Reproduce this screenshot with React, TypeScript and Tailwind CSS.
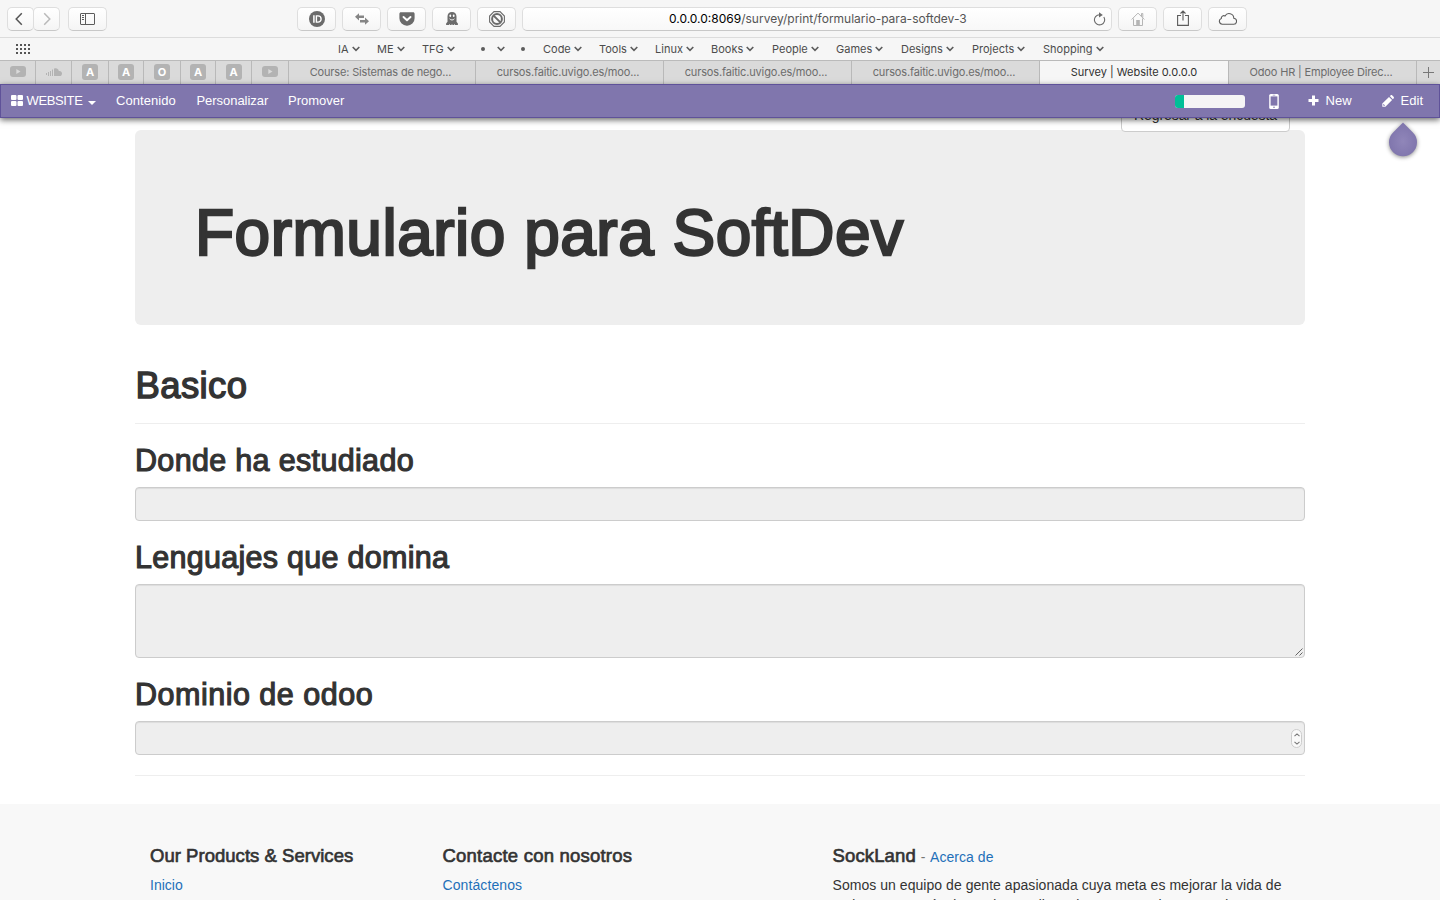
import React from "react";

const stroke = "#6b6b6b";

function ToolButton({ children, className = "" }: { children: React.ReactNode; className?: string }) {
  return (
    <button
      className={`flex h-6 items-center justify-center rounded-[5px] border border-[#dedede] border-b-[#c8c8c8] bg-linear-to-b from-white to-[#f5f5f5] ${className}`}
    >
      {children}
    </button>
  );
}

function Chevron() {
  return (
    <svg width="8" height="6" viewBox="0 0 8 6" fill="none" stroke="#5c5c5c" strokeWidth="1.6" className="-ml-px shrink-0">
      <path d="M.7 1 4 4.3 7.3 1" />
    </svg>
  );
}

function Toolbar() {
  return (
    <div className="flex h-[38px] items-center border-b border-[#dcdcdc] pl-[7px]">
      <ToolButton className="w-[27px]">
        <svg width="8" height="14" viewBox="0 0 8 14" fill="none" stroke="#555" strokeWidth="1.5" className="-ml-[3px]"><path d="M6.8 1.2 1.2 7l5.6 5.8" /></svg>
      </ToolButton>
      <ToolButton className="-ml-px w-[27px]">
        <svg width="8" height="14" viewBox="0 0 8 14" fill="none" stroke="#b9b9b9" strokeWidth="1.5"><path d="M1.2 1.2 6.8 7l-5.6 5.8" /></svg>
      </ToolButton>
      <ToolButton className="ml-2 w-[39px]">
        <svg width="15" height="12" viewBox="0 0 15 12" fill="none" stroke="#5c5c5c">
          <rect x=".5" y=".5" width="14" height="11" rx=".5" />
          <path d="M5.5 .5v11M2 2.5h2M2 4.5h2M2 6.5h2" />
        </svg>
      </ToolButton>
      <div className="ml-[190px] flex gap-1.5">
        <ToolButton className="w-[39px]">
          <svg width="16" height="16" viewBox="0 0 16 16">
            <circle cx="8" cy="8" r="8" fill={stroke} />
            <path d="M4.9 4.2v7.6" stroke="#fff" strokeWidth="1.5" />
            <path d="M7.4 4.9h1.6a3.1 3.1 0 0 1 0 6.2H7.4z" fill="none" stroke="#fff" strokeWidth="1.4" />
          </svg>
        </ToolButton>
        <ToolButton className="w-[39px]">
          <svg width="14" height="12" viewBox="0 0 14 12" fill="#858585">
            <path d="M0 3.8 4 .3v2.3h5v2.5H4v2.3zM14 8.2l-4 3.5V9.4H5V6.9h5V4.6z" />
          </svg>
        </ToolButton>
        <ToolButton className="w-[39px]">
          <svg width="16" height="14" viewBox="0 0 16 14">
            <path d="M2 .3h12c1 0 1.6.7 1.6 1.6v4.3A7.4 7.4 0 0 1 8 13.7 7.4 7.4 0 0 1 .4 6.2V1.9C.4 1 1 .3 2 .3z" fill={stroke} />
            <path d="M4.5 5 8 8.3 11.5 5" fill="none" stroke="#fff" strokeWidth="1.9" strokeLinecap="round" strokeLinejoin="round" />
          </svg>
        </ToolButton>
        <ToolButton className="w-[39px]">
          <svg width="12" height="13" viewBox="0 0 12 13">
            <path d="M1.5 4.6C1.5 1.8 3.1 0 6 0s4.5 1.8 4.5 4.6v5.2l1.4 1.7V13H.1v-1.5l1.4-1.7z" fill={stroke} />
            <ellipse cx="4.3" cy="3.8" rx=".9" ry="1.2" fill="#fff" /><ellipse cx="7.7" cy="3.8" rx=".9" ry="1.2" fill="#fff" />
            <path d="M3.6 6.8c1.2 1.6 3.6 1.6 4.8 0" fill="none" stroke="#fff" strokeWidth=".9" />
            <path d="M3.5 13v-1M6 13v-1M8.5 13v-1" stroke="#fff" strokeWidth=".6" />
          </svg>
        </ToolButton>
        <ToolButton className="w-[39px]">
          <svg width="16" height="16" viewBox="0 0 16 16" fill="none" stroke={stroke}>
            <path d="M5 .6h6L15.4 5v6L11 15.4H5L.6 11V5z" strokeWidth="1.1" />
            <circle cx="8" cy="8" r="4.9" strokeWidth="2" />
            <path d="m4.6 4.6 6.8 6.8" strokeWidth="2" />
          </svg>
        </ToolButton>
      </div>
      <div className="ml-1.5 flex h-6 w-[590px] items-center rounded-[5px] border border-[#dedede] border-b-[#c8c8c8] bg-linear-to-b from-white to-[#f8f8f8] pr-[5px] pl-[146px] text-xs text-[#555]">
        <span className="mt-px flex-1 whitespace-nowrap"><span className="text-black">0.0.0.0:8069</span>/survey/print/formulario-para-softdev-3</span>
        <svg width="13" height="14" viewBox="0 0 13 14" fill="none" stroke={stroke} strokeWidth="1.1">
          <path d="M10.8 5A5.1 5.1 0 1 1 6.5 2.7" /><path d="M6 .2 9.8 2.9 6 5.4z" fill={stroke} stroke="none" />
        </svg>
      </div>
      <div className="ml-1.5 flex gap-1.5">
        <ToolButton className="w-[39px]">
          <svg width="14" height="14" viewBox="0 0 14 14" fill="none" stroke="#b5b5b5">
            <path d="M.6 7.5 7 1.1l6.4 6.4M10.5 4.2V1.5h1.3v4M2.5 6.5v7h9v-7" /><path d="M5.2 8h3.6v5.5H5.2z" fill="#b5b5b5" stroke="none" />
          </svg>
        </ToolButton>
        <ToolButton className="w-[39px]">
          <svg width="12" height="16" viewBox="0 0 12 16" fill="none" stroke="#5c5c5c" strokeWidth="1.1" className="-mt-px">
            <path d="M4 5.5H.6v9.9h10.8V5.5H8M6 10.5V1M3.5 3.5 6 1l2.5 2.5" />
          </svg>
        </ToolButton>
        <ToolButton className="w-[39px]">
          <svg width="19" height="13" viewBox="0 0 19 13" fill="none" stroke="#5c5c5c" strokeWidth="1.1">
            <path d="M4.3 12.2h11a3 3 0 0 0 .5-6A4.7 4.7 0 0 0 7 4a2.5 2.5 0 0 0-3.7 2.4 3 3 0 0 0 1 5.8z" />
          </svg>
        </ToolButton>
      </div>
    </div>
  );
}

const bookmarks: { label: string; width: string; arrow: boolean }[] = [
  { label: "IA", width: "w-[39px]", arrow: true },
  { label: "ME", width: "w-[45px]", arrow: true },
  { label: "TFG", width: "w-[58px]", arrow: true },
  { label: "•", width: "w-10", arrow: true },
  { label: "•", width: "w-[23px]", arrow: false },
  { label: "Code", width: "w-14", arrow: true },
  { label: "Tools", width: "w-14", arrow: true },
  { label: "Linux", width: "w-14", arrow: true },
  { label: "Books", width: "w-[61px]", arrow: true },
  { label: "People", width: "w-16", arrow: true },
  { label: "Games", width: "w-[65px]", arrow: true },
  { label: "Designs", width: "w-[71px]", arrow: true },
  { label: "Projects", width: "w-[71px]", arrow: true },
  { label: "Shopping", width: "w-[71px]", arrow: true },
];

function Bookmarks() {
  return (
    <div className="flex h-[23px] items-center border-b border-[#bababa] pl-4 text-[11px] text-[#4c4c4c]">
      <svg width="14" height="10" viewBox="0 0 14 10" fill="#555" className="mr-[308px] shrink-0">
        {[0, 4, 8].map((y) => [0, 4, 8, 12].map((x) => <rect key={`${x}-${y}`} x={x} y={y} width="2" height="2" />))}
      </svg>
      {bookmarks.map((b, i) => (
        <div key={i} className={`flex shrink-0 items-center ${b.label === "•" ? "gap-[13px]" : "gap-1"} ${b.width}`}>
          {b.label === "•" ? <i className="ml-[1px] size-1 rounded-full bg-[#5c5c5c]" /> : <span>{b.label}</span>}
          {b.arrow && <Chevron />}
        </div>
      ))}
    </div>
  );
}

function YouTube() {
  return (
    <svg width="16" height="11" viewBox="0 0 16 11" className="-mt-[2px]"><rect width="16" height="11" rx="3" fill="#b3b3b3" /><path d="M6.3 3v5l4.2-2.5z" fill="#dadada" /></svg>
  );
}
function SoundCloud() {
  return (
    <svg width="16" height="8" viewBox="0 0 16 8" fill="#b3b3b3" className="-mt-px">
      <path d="M0 5h1v2H0zM2 4h1v4H2zM4 3h1v5H4zM6 1.5h1V8H6zM8 .7C10 -.4 12.5.6 12.8 3c1.6-.5 3.2.7 3.2 2.4C16 7 15 8 13.6 8H8z" />
    </svg>
  );
}
function Letter({ ch }: { ch: string }) {
  return <span className="-mt-px flex size-4 items-center justify-center rounded-[3px] bg-[#b3b3b3] text-[11px] leading-none font-bold text-white">{ch}</span>;
}

const pinned: { icon: React.ReactNode; width: string }[] = [
  { icon: <YouTube />, width: "w-9" },
  { icon: <SoundCloud />, width: "w-9" },
  { icon: <Letter ch="A" />, width: "w-[37px]" },
  { icon: <Letter ch="A" />, width: "w-[35px]" },
  { icon: <Letter ch="O" />, width: "w-[37px]" },
  { icon: <Letter ch="A" />, width: "w-[35px]" },
  { icon: <Letter ch="A" />, width: "w-9" },
  { icon: <YouTube />, width: "w-[37px]" },
];
const tabs: { title: string; width: string; active?: boolean }[] = [
  { title: "Course: Sistemas de nego...", width: "w-[187px]" },
  { title: "cursos.faitic.uvigo.es/moo...", width: "w-[188px]" },
  { title: "cursos.faitic.uvigo.es/moo...", width: "w-[188px]" },
  { title: "cursos.faitic.uvigo.es/moo...", width: "w-[188px]" },
  { title: "Survey | Website 0.0.0.0", width: "w-[189px]", active: true },
  { title: "Odoo HR | Employee Direc...", width: "w-[188px]" },
];

function TabBar() {
  return (
    <div className="flex h-[23px] bg-[#dadada] text-[11px]">
      {pinned.map((p, i) => (
        <div key={i} className={`flex shrink-0 items-center justify-center border-r border-[#b9b9b9] ${p.width}`}>{p.icon}</div>
      ))}
      {tabs.map((t, i) => (
        <div key={i} className={`flex shrink-0 items-center justify-center border-r border-[#b9b9b9] whitespace-nowrap ${t.active ? "bg-[#f6f6f6] text-[#303030]" : "pr-[3px] tracking-[-0.16px] text-[#6c6c6c]"} ${t.width}`}>
          <span>{t.title}</span>
        </div>
      ))}
      <div className="flex flex-1 items-center justify-center">
        <svg width="11" height="11" viewBox="0 0 11 11" stroke="#777"><path d="M5.5 0v11M0 5.5h11" /></svg>
      </div>
    </div>
  );
}

function OdooBar() {
  return (
    <nav className="relative z-20 flex h-[34px] shrink-0 items-center border border-[#5f5299] bg-[#8076ad] pr-[16px] pl-[10px] text-[13px] text-white shadow-[0_2px_6px_rgba(0,0,0,0.6)]">
      <svg width="12" height="11" viewBox="0 0 12 11" fill="#fff" className="mr-[3.5px] -mt-px">
        <rect width="5.5" height="5" rx="1" /><rect x="6.5" width="5.5" height="5" rx="1" /><rect y="6" width="5.5" height="5" rx="1" /><rect x="6.5" y="6" width="5.5" height="5" rx="1" />
      </svg>
      <span className="w-[61.5px] tracking-[-0.36px]">WEBSITE</span>
      <svg width="8" height="4" viewBox="0 0 8 4" fill="#fff" className="mt-[3px] mr-5"><path d="M0 0h8L4 4z" /></svg>
      <span className="w-[80.5px] tracking-[0.07px]">Contenido</span>
      <span className="w-[91.5px] tracking-[-0.05px]">Personalizar</span>
      <span>Promover</span>
      <div className="ml-auto h-[13px] w-[70px] overflow-hidden rounded-[3px] bg-[#f5f5f5]"><div className="h-full w-[9px] bg-[#00bf97]" /></div>
      <svg width="10" height="15" viewBox="0 0 10 15" className="ml-6">
        <rect x=".2" width="9.6" height="15" rx="1.6" fill="#fff" /><rect x="1.6" y="2.4" width="6.8" height="9.2" fill="#8076ad" /><path d="M3.7 1.2h2.6" stroke="#8076ad" strokeWidth=".6" /><circle cx="5" cy="13.3" r=".8" fill="#8076ad" />
      </svg>
      <svg width="11" height="11" viewBox="0 0 11 11" stroke="#fff" strokeWidth="3" className="-mt-px ml-[29px]"><path d="M5.5 .5v10M.5 5.5h10" /></svg>
      <span className="ml-[7px]">New</span>
      <svg width="12" height="12" viewBox="0 0 12 12" fill="#fff" className="ml-[30px]">
        <path d="M.3 11.7V8.6L7 1.9 10.1 5 3.4 11.7zM7.8 1.1 8.6.4c.5-.5 1.2-.5 1.7 0l1.3 1.3c.5.5.5 1.2 0 1.7l-.8.8z" /><path d="M1.6 9v1.4H3" fill="none" stroke="#8076ad" strokeWidth=".7" />
      </svg>
      <span className="ml-[7px]">Edit</span>
      <svg width="40" height="44" viewBox="0 0 40 44" className="absolute top-[36px] right-[16px] drop-shadow-[0_1px_2px_rgba(0,0,0,0.45)]">
        <defs><radialGradient id="drop" cx="50%" cy="55%"><stop offset="0" stopColor="#9086b9" /><stop offset="1" stopColor="#8076ad" /></radialGradient></defs>
        <path d="M20 1.5 29.9 11.4a14 14 0 1 1-19.8 0z" fill="url(#drop)" />
      </svg>
    </nav>
  );
}

const field = "block w-full rounded-[4px] border border-[#ccc] bg-[#eee] shadow-[inset_0_1px_1px_rgba(0,0,0,0.075)] outline-none";
const question = "pt-5 pb-2.5 text-[30.5px] leading-[33px] [-webkit-text-stroke:1.15px_#333]";

function Survey() {
  return (
    <main className="relative mx-auto h-[686px] w-[1170px] shrink-0 pt-[12px]">
      <button className="absolute -top-[20px] right-[15px] z-10 h-[34px] w-[169px] rounded-[4px] border border-[#ccc] bg-white text-sm tracking-[-0.08px] text-[#333]">Regresar a la encuesta</button>
      <header className="flex h-[195px] items-center rounded-md bg-[#eee] pt-[11px] pl-[60px]">
        <h1 className="text-[64px] leading-none tracking-[0.5px] [-webkit-text-stroke:2.4px_#333]">Formulario para SoftDev</h1>
      </header>
      <h2 className="mt-10 h-[58px] pl-[0.5px] text-[36.5px] leading-[42px] tracking-[0.4px] [-webkit-text-stroke:1.4px_#333]">Basico</h2>
      <hr className="border-[#eee]" />
      <h3 className={`${question} tracking-[0.33px]`}>Donde ha estudiado</h3>
      <input className={`${field} h-[34px]`} readOnly />
      <h3 className={`${question} tracking-[0.28px]`}>Lenguajes que domina</h3>
      <div className={`${field} flex h-[74px] items-end justify-end p-[1px]`}>
        <svg width="8" height="8" viewBox="0 0 8 8" stroke="#555" strokeWidth=".9"><path d="M.5 7.5l7-7M4.5 7.5l3-3" /></svg>
      </div>
      <h3 className={`${question} tracking-[0.5px]`}>Dominio de odoo</h3>
      <div className={`${field} flex h-[34px] items-center justify-end pr-[2px]`}>
        <span className="mt-px flex h-[19px] w-[11px] flex-col items-center justify-center gap-[4px] rounded-full border border-[#ccc] bg-[#f9f9f9]">
          <svg width="6" height="4" viewBox="0 0 6 4" fill="none" stroke="#777" strokeWidth="1.1"><path d="M.5 3.2 3 .9l2.5 2.3" /></svg>
          <svg width="6" height="4" viewBox="0 0 6 4" fill="none" stroke="#777" strokeWidth="1.1"><path d="M.5.8 3 3.1 5.5.8" /></svg>
        </span>
      </div>
      <hr className="mt-5 border-[#eee]" />
    </main>
  );
}

const footHead = "text-[18.5px] leading-5 text-[#333] [-webkit-text-stroke:0.65px_#333]";

function Footer() {
  return (
    <footer className="flex-1 bg-[#f8f8f8] pt-[42px] text-sm leading-5">
      <div className="mx-auto flex w-[1170px]">
        <div className="w-[292.5px] pl-[15px]">
          <h4 className={`${footHead} tracking-[0.03px]`}>Our Products &amp; Services</h4>
          <a className="mt-[9px] block text-[#1f70b8]">Inicio</a>
        </div>
        <div className="w-[390px] pl-[15px]">
          <h4 className={`${footHead} tracking-[0.22px]`}>Contacte con nosotros</h4>
          <a className="mt-[9px] block tracking-[0.1px] text-[#1f70b8]">Contáctenos</a>
        </div>
        <div className="w-[487.5px] pr-5 pl-[15px]">
          <div className="flex h-5 items-baseline">
            <h4 className={`${footHead} tracking-[0.13px]`}>SockLand</h4>
            <span className="ml-[5px] text-[#777]">-</span>
            <a className="ml-[4.5px] tracking-[0.05px] text-[#1f70b8]">Acerca de</a>
          </div>
          <p className="mt-[9px] tracking-[0.045px] whitespace-nowrap">Somos un equipo de gente apasionada cuya meta es mejorar la vida de<br />cada uno a través de productos disruptivos. Construimos grandes</p>
        </div>
      </div>
    </footer>
  );
}

export default function App() {
  return (
    <div className="flex h-[900px] w-[1440px] flex-col overflow-hidden bg-white font-['Liberation_Sans',Arial,sans-serif] text-[#333]">
      <div className="shrink-0 bg-[#f6f6f6] font-['Inter',sans-serif]">
        <Toolbar />
        <Bookmarks />
        <TabBar />
      </div>
      <OdooBar />
      <Survey />
      <Footer />
    </div>
  );
}
